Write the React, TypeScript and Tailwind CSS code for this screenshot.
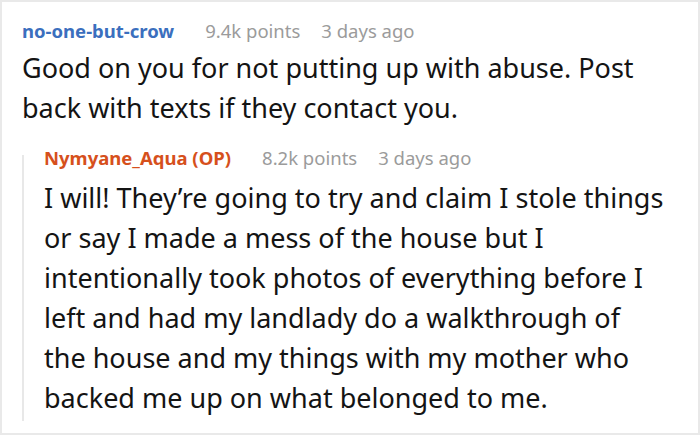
export default function App() {
  return (
    <div className="w-[700px] h-[436px] bg-white font-['Noto_Sans',sans-serif]">
      <div className="h-[435px] border-2 border-[#e9e9e9] pl-5 pr-1 pt-[16px]">
        {/* Parent comment */}
        <div className="flex items-baseline text-[18.5px] leading-[26px]">
          <span className="font-bold text-[#3b6fbe]">no-one-but-crow</span>
          <span className="ml-[31px] text-[#9b9b9b]">9.4k points</span>
          <span className="ml-[21px] text-[#9b9b9b]">3 days ago</span>
        </div>
        <p className="mt-[4px] text-[27px] leading-[40px] text-[#141414] whitespace-nowrap">
          Good on you for not putting up with abuse. Post
          <br />
          back with texts if they contact you.
        </p>

        {/* Reply */}
        <div className="mt-[20px] flex">
          <div className="w-[2px] shrink-0 bg-[#e8e8e8] mt-[7px]" />
          <div className="pl-5 pb-[3px]">
            <div className="flex items-baseline text-[18.5px] leading-[20px]">
              <span className="font-bold text-[#d6501c]">Nymyane_Aqua (OP)</span>
              <span className="ml-[31px] text-[#9b9b9b]">8.2k points</span>
              <span className="ml-[21px] text-[#9b9b9b]">3 days ago</span>
            </div>
            <p className="mt-[10px] text-[27px] leading-[40px] text-[#141414] whitespace-nowrap">
              I will! They’re going to try and claim I stole things
              <br />
              or say I made a mess of the house but I
              <br />
              intentionally took photos of everything before I
              <br />
              left and had my landlady do a walkthrough of
              <br />
              the house and my things with my mother who
              <br />
              backed me up on what belonged to me.
            </p>
          </div>
        </div>
      </div>
    </div>
  );
}
